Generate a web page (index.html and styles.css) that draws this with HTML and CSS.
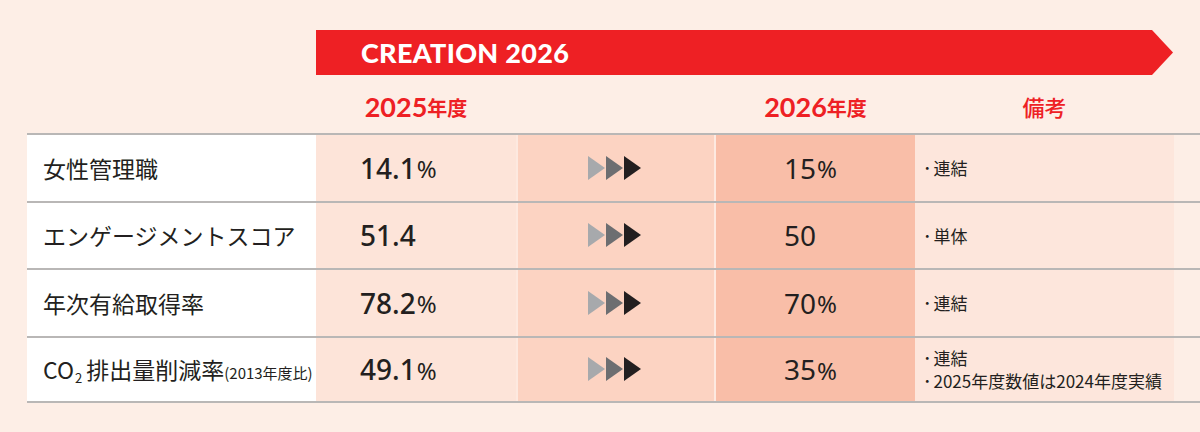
FILE: index.html
```html
<!DOCTYPE html>
<html lang="ja">
<head>
<meta charset="utf-8">
<title>CREATION 2026</title>
<link rel="stylesheet" href="styles.css">
</head>
<body>
<div class="page">
  <div class="banner-row">
    <div class="spacer"></div>
    <div class="banner"><span>CREATION 2026</span></div>
  </div>
  <div class="head-row">
    <div></div>
    <div class="hd"><span class="yr">2025</span><span class="nd">年度</span></div>
    <div></div>
    <div class="hd"><span class="yr">2026</span><span class="nd">年度</span></div>
    <div class="hd note-hd">備考</div>
  </div>

  <div class="row">
    <div class="label"><span>女性管理職</span></div>
    <div class="c25"><span class="num">14.1</span><span class="pct">%</span></div>
    <div class="carr"><span class="tri t1"></span><span class="tri t2"></span><span class="tri t3"></span></div>
    <div class="c26"><span class="num">15</span><span class="pct">%</span></div>
    <div class="cnote"><p><span class="dot">･</span>連結</p></div>
  </div>

  <div class="row">
    <div class="label"><span>エンゲージメントスコア</span></div>
    <div class="c25"><span class="num">51.4</span></div>
    <div class="carr"><span class="tri t1"></span><span class="tri t2"></span><span class="tri t3"></span></div>
    <div class="c26"><span class="num">50</span></div>
    <div class="cnote"><p><span class="dot">･</span>単体</p></div>
  </div>

  <div class="row">
    <div class="label"><span>年次有給取得率</span></div>
    <div class="c25"><span class="num">78.2</span><span class="pct">%</span></div>
    <div class="carr"><span class="tri t1"></span><span class="tri t2"></span><span class="tri t3"></span></div>
    <div class="c26"><span class="num">70</span><span class="pct">%</span></div>
    <div class="cnote"><p><span class="dot">･</span>連結</p></div>
  </div>

  <div class="row last">
    <div class="label"><span>CO<sub>2</sub>排出量削減率<span class="small">(2013年度比)</span></span></div>
    <div class="c25"><span class="num">49.1</span><span class="pct">%</span></div>
    <div class="carr"><span class="tri t1"></span><span class="tri t2"></span><span class="tri t3"></span></div>
    <div class="c26"><span class="num">35</span><span class="pct">%</span></div>
    <div class="cnote"><p><span class="dot">･</span>連結</p><p><span class="dot">･</span>2025年度数値は2024年度実績</p></div>
  </div>
</div>
</body>
</html>
```

FILE: styles.css
```css
* { box-sizing: border-box; }
html, body { margin: 0; padding: 0; }
body {
  background: #fdeee6;
  width: 1200px;
  height: 432px;
  overflow: hidden;
  font-family: "Noto Sans CJK JP", "Noto Sans", sans-serif;
  color: #231f20;
}
.page {
  padding: 30px 0 0 27px;
}
.banner-row, .head-row, .row {
  display: grid;
  grid-template-columns: 289px 200px 200px 199px 259px;
}
.banner {
  grid-column: 2 / 6;
  height: 45px;
  width: 857px;
  background: #ee2024;
  clip-path: polygon(0 0, 836px 0, 857px 50%, 836px 100%, 0 100%);
  display: flex;
  align-items: center;
  padding-left: 45px;
}
.banner span {
  font-family: "Lato", "Noto Sans", sans-serif;
  font-weight: 900;
  font-size: 27px;
  letter-spacing: 0.3px;
  color: #fff;
}
.head-row {
  height: 58px;
}
.hd {
  display: flex;
  align-items: center;
  justify-content: center;
  color: #ee2024;
  padding-top: 4px;
}
.hd .yr {
  font-family: "Lato", "Noto Sans", sans-serif;
  font-weight: 700;
  font-size: 27px;
}
.hd .nd {
  font-family: "Noto Sans CJK JP", sans-serif;
  font-weight: 700;
  font-size: 20px;
  margin-top: 3px;
}
.note-hd {
  font-family: "Noto Sans CJK JP", sans-serif;
  font-weight: 500;
  font-size: 22px;
}
.row {
  height: 67.5px;
  border-top: 2px solid #b9b7b6;
}
.row.last {
  border-bottom: 2px solid #b9b7b6;
}
.row > div {
  display: flex;
  align-items: center;
}
.label {
  background: #fff;
  padding-left: 16px;
  font-size: 23px;
  white-space: nowrap;
}
.label sub {
  font-size: 13px;
  vertical-align: baseline;
  position: relative;
  top: 4px;
  margin-left: 1px;
  margin-right: 4px;
}
.label .small {
  font-size: 15px;
}
.c25 {
  background: #fde4d9;
  padding-left: 44px;
}
.carr {
  background: #fcd3c2;
  border-left: 2px solid #fde9e0;
  border-right: 2px solid #fde9e0;
  padding-left: 70px;
  gap: 1px;
}
.c26 {
  background: #f9bea8;
  padding-left: 68px;
}
.c26 .num { font-weight: 400; }
.cnote {
  background: #fde6dc;
  padding-left: 8px;
  flex-direction: column;
  justify-content: center;
  align-items: flex-start !important;
}
.cnote p {
  margin: 0;
  font-size: 17px;
  line-height: 23px;
  height: 23px;
  white-space: nowrap;
}
.dot {
  display: inline-block;
  margin-right: 2px;
}
.num {
  font-family: "Noto Sans", sans-serif;
  font-weight: 500;
  font-size: 28px;
}
.pct {
  font-family: "Noto Sans", sans-serif;
  font-weight: 400;
  font-size: 24px;
  margin-top: 2px;
  margin-left: 1px;
}
.tri {
  width: 0;
  height: 0;
  border-top: 12.5px solid transparent;
  border-bottom: 12.5px solid transparent;
  border-left: 17px solid #a7a9ac;
}
.tri.t2 { border-left-color: #6d6e71; }
.tri.t3 { border-left-color: #231f20; }
```
